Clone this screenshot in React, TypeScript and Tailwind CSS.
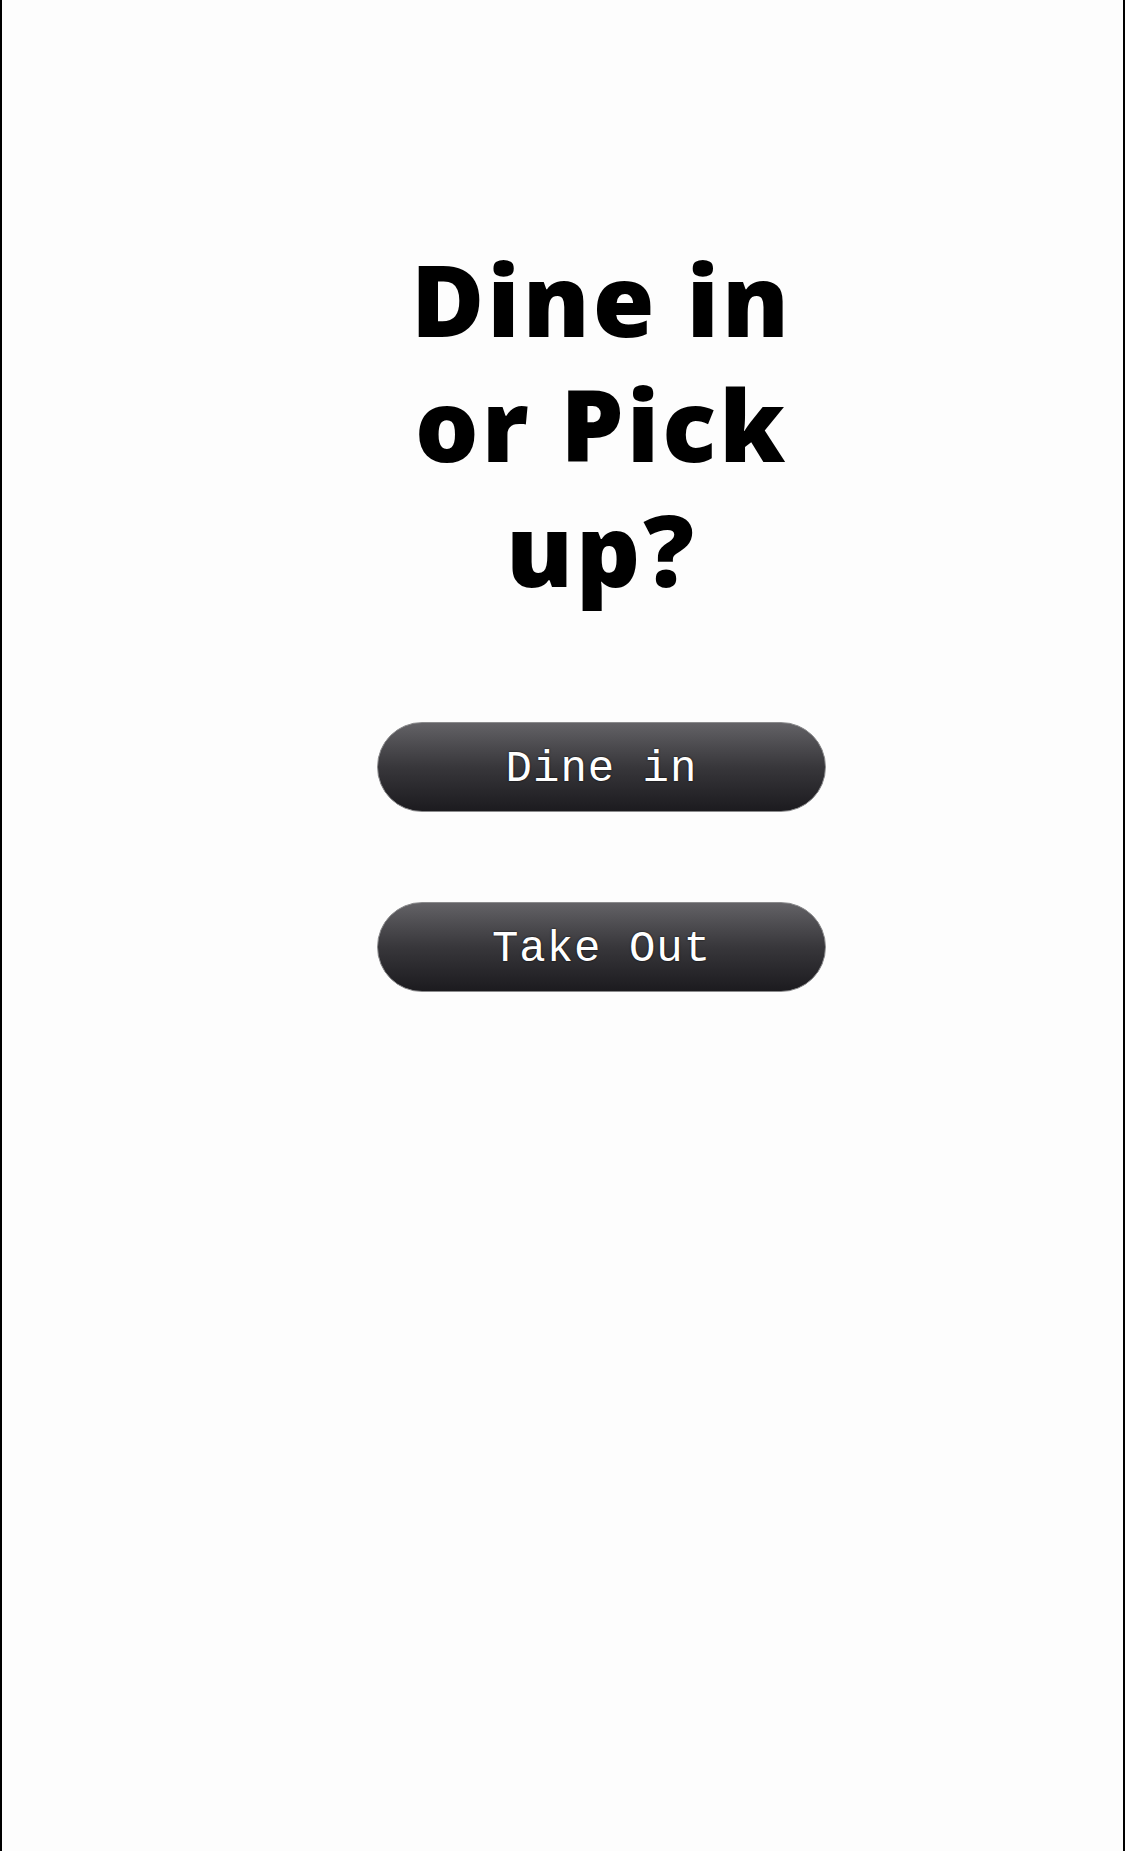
export default function App() {
  return (
    <div className="min-h-[1851px] w-[1125px] bg-[#fdfdfd] border-l-2 border-r-2 border-black flex flex-col items-center pl-[78px]">
      <h1 className="mt-[236px] text-center text-[100px] leading-[125px] font-extrabold text-black font-['Open_Sans',sans-serif] tracking-[3px]">
        Dine in
        <br />
        or Pick
        <br />
        up?
      </h1>

      <div className="mt-[111px] flex flex-col gap-[90px]">
        <ChoiceButton label="Dine in" />
        <ChoiceButton label="Take Out" />
      </div>
    </div>
  )
}

function ChoiceButton({ label }: { label: string }) {
  return (
    <button
      className="w-[449px] h-[90px] pt-[4px] rounded-full border border-[#8a8a8c]
                 bg-gradient-to-b from-[#636266] via-[#38373b] to-[#1c1b1f]
                 text-white text-[44px] font-['Courier_New','Liberation_Mono',monospace]
                 [text-shadow:0_0_2px_#000] tracking-[1px]"
    >
      {label}
    </button>
  )
}
